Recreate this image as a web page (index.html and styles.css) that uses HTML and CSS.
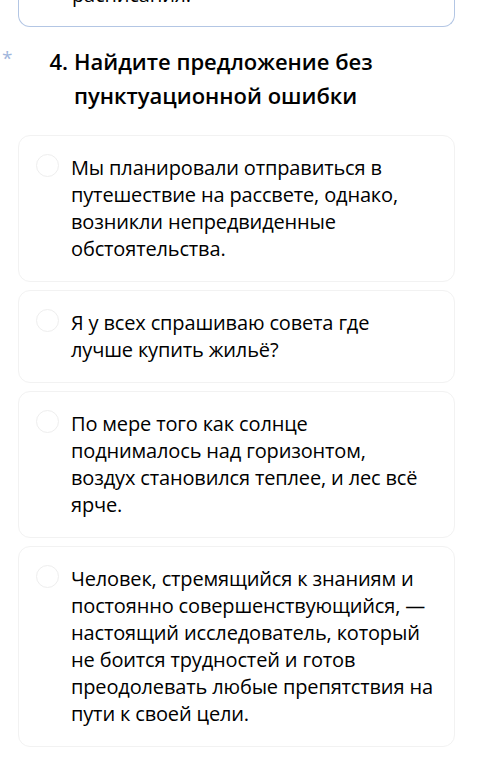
FILE: index.html
```html
<!DOCTYPE html>
<html lang="ru">
<head>
<meta charset="utf-8">
<link rel="stylesheet" href="styles.css">
</head>
<body>
<div class="page">
  <div class="card card-prev">
    <div class="opt-text">расписания.</div>
  </div>

  <div class="question">
    <span class="required">*</span>
    <span class="q-num">4.</span>
    <span class="q-text">Найдите предложение без<br>пунктуационной ошибки</span>
  </div>

  <div class="options">
    <label class="option">
      <span class="radio"></span>
      <span class="opt-text">Мы планировали отправиться в<br>путешествие на рассвете, однако,<br>возникли непредвиденные<br>обстоятельства.</span>
    </label>
    <label class="option">
      <span class="radio"></span>
      <span class="opt-text">Я у всех спрашиваю совета где<br>лучше купить жильё?</span>
    </label>
    <label class="option">
      <span class="radio"></span>
      <span class="opt-text">По мере того как солнце<br>поднималось над горизонтом,<br>воздух становился теплее, и лес всё<br>ярче.</span>
    </label>
    <label class="option">
      <span class="radio"></span>
      <span class="opt-text">Человек, стремящийся к знаниям и<br>постоянно совершенствующийся, —<br>настоящий исследователь, который<br>не боится трудностей и готов<br>преодолевать любые препятствия на<br>пути к своей цели.</span>
    </label>
  </div>
</div>
</body>
</html>
```

FILE: styles.css
```css
* { box-sizing: border-box; }
html, body { margin: 0; padding: 0; background: #fff; }
body {
  font-family: "Open Sans", "Noto Sans", sans-serif;
  color: #000;
  overflow: hidden;
}
.page {
  padding: 0 31px 0 18px;
}
.card-prev {
  margin-top: -19px;
  border: 1px solid #b3c6e4;
  border-top: none;
  border-radius: 0 0 12px 12px;
  padding: 0 18px 18px 53px;
}
.opt-text {
  font-size: 20px;
  line-height: 27px;
  letter-spacing: -0.15px;
  white-space: nowrap;
}
.question {
  position: relative;
  display: flex;
  margin-top: 17px;
  font-weight: 600;
  font-size: 22px;
  line-height: 34px;
}
.required {
  position: absolute;
  left: -16px;
  top: -3px;
  font-weight: 400;
  font-size: 19px;
  color: #9fb6dc;
}
.q-num {
  width: 56px;
  flex: none;
  text-align: right;
  padding-right: 6px;
}
.options {
  display: flex;
  flex-direction: column;
  gap: 8px;
  margin-top: 23px;
}
.option {
  display: flex;
  align-items: flex-start;
  gap: 12px;
  border: 1px solid #f2f2f2;
  border-radius: 12px;
  padding: 18px 12px 19px 17px;
}
.radio {
  flex: none;
  width: 23px;
  height: 23px;
  border: 1px solid #eeeeee;
  border-radius: 50%;
}
```
